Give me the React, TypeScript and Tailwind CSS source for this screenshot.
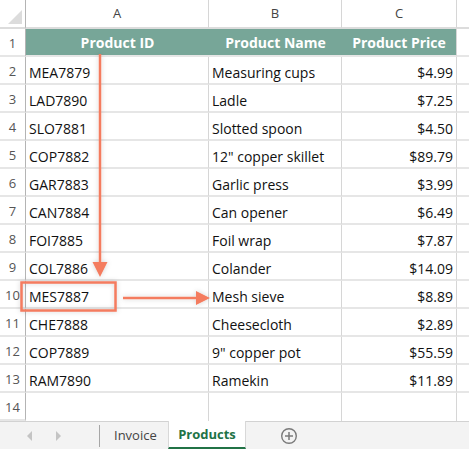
import React from "react";

const rows: [string, string, string][] = [
  ["MEA7879", "Measuring cups", "$4.99"],
  ["LAD7890", "Ladle", "$7.25"],
  ["SLO7881", "Slotted spoon", "$4.50"],
  ["COP7882", '12" copper skillet', "$89.79"],
  ["GAR7883", "Garlic press", "$3.99"],
  ["CAN7884", "Can opener", "$6.49"],
  ["FOI7885", "Foil wrap", "$7.87"],
  ["COL7886", "Colander", "$14.09"],
  ["MES7887", "Mesh sieve", "$8.89"],
  ["CHE7888", "Cheesecloth", "$2.89"],
  ["COP7889", '9" copper pot', "$55.59"],
  ["RAM7890", "Ramekin", "$11.89"],
];

const gridCols = "grid grid-cols-[26px_183px_133px_115px_1fr]";
const cellText = "text-[14px] text-[#111] leading-none";

function RowNum({ n }: { n: number }) {
  return (
    <div className="flex items-end justify-center pb-[5px] border-r border-r-[#b4b4b4] border-b-2 border-b-[#e6e6e6] text-[13px] text-[#555] leading-none">
      {n}
    </div>
  );
}

export default function App() {
  return (
    <div
      className="relative w-[469px] h-[449px] bg-white overflow-hidden"
      style={{ fontFamily: '"Open Sans", "Noto Sans", sans-serif' }}
    >
      {/* column headers */}
      <div className={`${gridCols} h-[29px]`}>
        <div className="relative border-r border-r-[#b4b4b4] border-b-2 border-b-[#dcdcdc]">
          <div className="absolute right-[3px] bottom-[3px] w-0 h-0 border-l-[14px] border-l-transparent border-b-[14px] border-b-[#dcdcdc]" />
        </div>
        {["A", "B", "C", ""].map((l, i) => (
          <div
            key={i}
            className={`flex items-center justify-center pt-[1px] text-[13px] text-[#444] border-b-2 border-b-[#dcdcdc] ${i < 3 ? "border-r border-r-[#d6d6d6]" : ""}`}
          >
            {l}
          </div>
        ))}
      </div>

      {/* row 1 header */}
      <div className={`${gridCols} h-[28px]`}>
        <RowNum n={1} />
        <div className="flex items-center justify-center bg-[#77a698] border-b-2 border-b-[#e6e6e6] text-[14px] font-bold text-white">
          Product ID
        </div>
        <div className="flex items-center justify-center bg-[#77a698] border-b-2 border-b-[#e6e6e6] text-[14px] font-bold text-white">
          Product Name
        </div>
        <div className="flex items-center justify-center bg-[#77a698] border-r border-r-[#d6d6d6] border-b-2 border-b-[#e6e6e6] text-[14px] font-bold text-white">
          Product Price
        </div>
        <div className="border-b-2 border-b-[#e6e6e6]" />
      </div>

      {rows.map((r, i) => (
        <div key={i} className={`${gridCols} h-[28px]`}>
          <RowNum n={i + 2} />
          <div className={`flex items-center pl-[3px] pt-[5px] border-r border-r-[#d6d6d6] border-b-2 border-b-[#e6e6e6] ${cellText}`}>
            {r[0]}
          </div>
          <div className={`flex items-center pl-[3px] pt-[5px] border-r border-r-[#d6d6d6] border-b-2 border-b-[#e6e6e6] ${cellText}`}>
            {r[1]}
          </div>
          <div className={`flex items-center justify-end pr-[3px] pt-[5px] border-r border-r-[#d6d6d6] border-b-2 border-b-[#e6e6e6] ${cellText}`}>
            {r[2]}
          </div>
          <div className="border-b-2 border-b-[#e6e6e6]" />
        </div>
      ))}

      {/* row 14 */}
      <div className={`${gridCols} h-[28px]`}>
        <RowNum n={14} />
        <div className="border-r border-r-[#d6d6d6]" />
        <div className="border-r border-r-[#d6d6d6]" />
        <div className="border-r border-r-[#d6d6d6]" />
        <div />
      </div>

      {/* tab bar */}
      <div className="flex items-stretch h-[28px] bg-[#f3f3f3] border-t border-t-[#d2d2d2]">
        <div className="w-[100px] flex items-center">
          <svg width="100" height="27" viewBox="0 0 100 27">
            <polygon points="32,9 32,19 27,14" fill="#c4c4c4" />
            <polygon points="56,9 56,19 61,14" fill="#c4c4c4" />
            <line x1="99.5" y1="3" x2="99.5" y2="25" stroke="#a6a6a6" strokeWidth="1" />
          </svg>
        </div>
        <div className="w-[68px] flex items-center pl-[14px] text-[13px] text-[#444]">Invoice</div>
        <div className="w-[78px] -mt-px bg-white border-x border-x-[#d8d8d8] border-b-2 border-b-[#217346] flex items-center justify-center pt-[1px] text-[13px] font-bold text-[#217346]">
          Products
        </div>
        <div className="flex items-center pl-[34px]">
          <svg width="18" height="18" viewBox="0 0 18 18">
            <circle cx="9" cy="9" r="7.3" fill="none" stroke="#7a7a7a" strokeWidth="1.4" />
            <line x1="9" y1="5" x2="9" y2="13" stroke="#7a7a7a" strokeWidth="1.5" />
            <line x1="5" y1="9" x2="13" y2="9" stroke="#7a7a7a" strokeWidth="1.5" />
          </svg>
        </div>
      </div>

      {/* annotation overlay */}
      <svg
        className="absolute left-0 top-0 pointer-events-none"
        width="469"
        height="449"
        viewBox="0 0 469 449"
      >
        <defs>
          <filter id="sh" x="-20%" y="-20%" width="140%" height="140%">
            <feDropShadow dx="0" dy="0" stdDeviation="2.5" floodColor="#000" floodOpacity="0.18" />
          </filter>
        </defs>
        <g filter="url(#sh)" fill="#f47b5e" stroke="#f47b5e">
          <line x1="100" y1="54" x2="100" y2="263" strokeWidth="2.5" />
          <polygon points="92.5,262 107.5,262 100,277" stroke="none" />
          <rect x="21.5" y="282.5" width="94" height="28" fill="none" strokeWidth="2.5" />
          <line x1="123" y1="298" x2="197" y2="298" strokeWidth="2.5" />
          <polygon points="196,291 196,305 210,298" stroke="none" />
        </g>
      </svg>
    </div>
  );
}
